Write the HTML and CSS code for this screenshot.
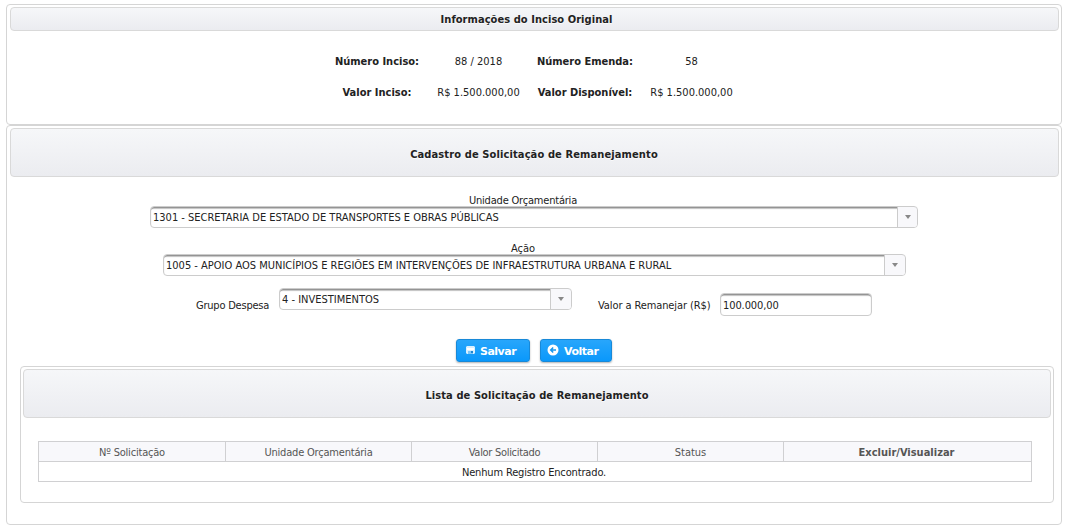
FILE: index.html
```
<!DOCTYPE html>
<html lang="pt-BR">
<head>
<meta charset="utf-8">
<title>Solicitação de Remanejamento</title>
<link rel="stylesheet" href="styles.css">
</head>
<body>
<section class="panel panel-info">
  <h2 class="panel-title title-info"><span>Informações do Inciso Original</span></h2>
  <div class="info-grid">
    <b>Número Inciso:</b><span>88 / 2018</span><b>Número Emenda:</b><span>58</span>
    <b>Valor Inciso:</b><span>R$ 1.500.000,00</span><b>Valor Disponível:</b><span>R$ 1.500.000,00</span>
  </div>
</section>
<section class="panel panel-form">
  <h2 class="panel-title title-form"><span>Cadastro de Solicitação de Remanejamento</span></h2>
  <form class="form">
    <label class="field-label t-unit">Unidade Orçamentária</label>
    <div class="select select-unit"><span class="value">1301 - SECRETARIA DE ESTADO DE TRANSPORTES E OBRAS PÚBLICAS</span><span class="trigger"><i class="caret"></i></span></div>
    <label class="field-label label-action">Ação</label>
    <div class="select select-action"><span class="value">1005 - APOIO AOS MUNICÍPIOS E REGIÕES EM INTERVENÇÕES DE INFRAESTRUTURA URBANA E RURAL</span><span class="trigger"><i class="caret"></i></span></div>
    <div class="form-row">
      <label class="row-label t-group">Grupo Despesa</label>
      <div class="select select-group"><span class="value">4 - INVESTIMENTOS</span><span class="trigger"><i class="caret"></i></span></div>
      <label class="row-label label-value">Valor a Remanejar (R$)</label>
      <div class="input"><span class="value">100.000,00</span></div>
    </div>
    <div class="actions">
      <button type="button" class="btn btn-save"><svg class="icon" width="16" height="16" viewBox="0 0 16 16"><path fill="#d9effe" d="M5 4h7l1 1v6l-1 1H5l-1-1V5z"/><path fill="#fff" d="M5 6h7v2H5z"/><path fill="#7cc6f8" d="M6 9h5v3H6z"/><path fill="#1a85d0" d="M9 9h2v2H9z"/></svg><span>Salvar</span></button>
      <button type="button" class="btn btn-back"><svg class="icon" width="16" height="16" viewBox="0 0 16 16"><circle cx="8" cy="8" r="5.5" fill="#fff"/><path fill="none" stroke="#1596ed" stroke-width="1.5" d="M11 8H6M8.2 5.5 5.7 8l2.5 2.5"/></svg><span>Voltar</span></button>
    </div>
  </form>
  <section class="panel panel-list">
    <h2 class="panel-title title-list"><span>Lista de Solicitação de Remanejamento</span></h2>
    <table class="list">
      <thead><tr><th class="first"><span class="t-unit">Nº Solicitação</span></th><th><span class="t-unit">Unidade Orçamentária</span></th><th><span class="t-requested">Valor Solicitado</span></th><th><span>Status</span></th><th class="last"><span>Excluir/Visualizar</span></th></tr></thead>
      <tbody><tr><td colspan="5"><span class="t-none">Nenhum Registro Encontrado.</span></td></tr></tbody>
    </table>
  </section>
</section>
</body>
</html>
```
FILE: styles.css
```
* { box-sizing: border-box; }
body {
  margin: 0;
  padding: 4px 6px 0;
  background: #fff;
  color: #222;
  font: 11px/14px "DejaVu Sans Condensed", "DejaVu Sans", sans-serif;
  font-stretch: condensed;
}
.panel { width: 1056px; border: 1px solid #d5d5d5; border-radius: 4px; padding: 2px 2px 0 3px; }
.panel-info { height: 121px; }
.panel-form { height: 400px; }
.panel-title {
  margin: 0;
  border: 1px solid #d9d9d9;
  border-radius: 4px;
  background: linear-gradient(#f6f7f9, #ebecf0);
  display: flex;
  align-items: center;
  justify-content: center;
  font-size: 11px;
  font-weight: bold;
  text-shadow: 0 1px 0 rgba(255, 255, 255, .7);
}
.title-info { height: 24px; width: 1049px; padding: 2px 16px 0 0; letter-spacing: .06px; }
.title-form { height: 49px; width: 1049px; padding: 4px 1px 0 0; letter-spacing: .12px; }
.title-list { height: 49px; padding: 4px 0 0; letter-spacing: .09px; }

.info-grid {
  display: grid;
  grid-template-columns: 106px 97px 116px 97px;
  grid-template-rows: 31px 31px;
  width: 416px;
  margin: 15px 0 0 314px;
  align-items: center;
  text-align: center;
  white-space: nowrap;
}

.form { display: flex; flex-direction: column; align-items: flex-start; height: 189px; padding-top: 16px; }
.field-label { display: block; flex: none; width: 1026px; height: 13px; line-height: 15px; text-align: center; white-space: nowrap; }
.label-action { margin-top: 13px; }
.select, .input {
  flex: none;
  height: 22px;
  display: flex;
  border: 1px solid #ccc;
  border-radius: 4px;
  background: #fff;
  box-shadow: inset 0 2px 1px -0.5px #8f8f8f;
  overflow: hidden;
  white-space: nowrap;
}
.value { flex: 1; padding: 4px 0 0 2px; }
.trigger {
  width: 20px;
  height: 20px;
  border-left: 1px solid #ccc;
  background: #f8f8fb;
  display: flex;
  align-items: center;
  justify-content: center;
}
.caret { border: 3.5px solid transparent; border-top: 4px solid #888; border-bottom: 0; }
.select-unit { width: 768px; margin-left: 140px; }
.select-action { width: 743px; margin-left: 153px; }
.select-action .trigger, .select-group .trigger { width: 21px; }
.form-row { display: flex; flex: none; height: 30px; margin-top: 12px; padding-left: 186px; white-space: nowrap; }
.row-label { width: 83px; padding-top: 11px; }
.select-group { width: 293px; }
.label-value { width: 122px; margin-left: 26px; letter-spacing: -.1px; }
.input { width: 152px; height: 23px; margin-top: 5px; }
.input .value { padding-top: 5px; letter-spacing: -.1px; }

.t-unit { letter-spacing: -.2px; }
.t-group { letter-spacing: -.22px; }
.t-requested { letter-spacing: -.3px; }
.t-none { letter-spacing: -.15px; margin-right: 2px; }

.actions { display: flex; gap: 10px; margin: 21px 0 0 446px; }
.btn {
  height: 23px;
  border: 1px solid #1889d8;
  border-radius: 3px;
  background: linear-gradient(#28a6fb, #0a98fb);
  color: #fff;
  font: bold 11px/14px "DejaVu Sans", sans-serif;
  letter-spacing: -.5px;
  padding: 0 0 0 5px;
  display: flex;
  align-items: center;
  box-shadow: 0 1px 2px rgba(0, 0, 0, .3);
}
.btn span { padding-top: 2px; }
.btn-save { width: 74px; }
.btn-back { width: 72px; padding-left: 4px; }
.icon { flex: none; margin: 0 3px 1px 0; }
.btn-save .icon { margin-right: 2px; }

.panel-list { width: 1034px; height: 137px; margin-left: 10px; padding: 2px; }
.list { width: 994px; margin: 23px 0 0 15px; border-collapse: collapse; table-layout: fixed; }
.list th, .list td { height: 20px; padding: 2px 0 0; border: 1px solid #d0d0d2; text-align: center; line-height: 14px; white-space: nowrap; }
.list th { width: 186px; background: #f8f8fb; color: #555; font-weight: normal; }
.list .first { width: 187px; }
.list .last { width: auto; font-weight: bold; padding-right: 2px; }
```
